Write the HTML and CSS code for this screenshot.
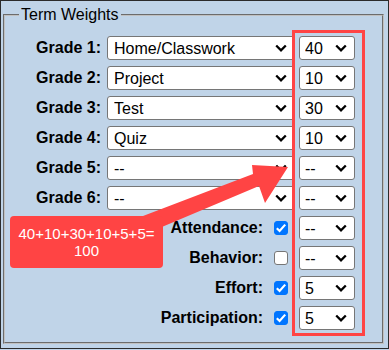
FILE: index.html
```html
<!DOCTYPE html>
<html>
<head>
<meta charset="utf-8">
<link rel="stylesheet" href="styles.css">
</head>
<body>
<div class="frame">
  <fieldset class="weights">
    <legend>Term Weights</legend>
    <div class="grid">
      <label class="lbl">Grade 1:</label>
      <select class="cat"><option>Home/Classwork</option></select>
      <select class="pct"><option>40</option></select>

      <label class="lbl">Grade 2:</label>
      <select class="cat"><option>Project</option></select>
      <select class="pct"><option>10</option></select>

      <label class="lbl">Grade 3:</label>
      <select class="cat"><option>Test</option></select>
      <select class="pct"><option>30</option></select>

      <label class="lbl">Grade 4:</label>
      <select class="cat"><option>Quiz</option></select>
      <select class="pct"><option>10</option></select>

      <label class="lbl">Grade 5:</label>
      <select class="cat"><option>--</option></select>
      <select class="pct"><option>--</option></select>

      <label class="lbl">Grade 6:</label>
      <select class="cat"><option>--</option></select>
      <select class="pct"><option>--</option></select>

      <div class="extra"><label class="lbl">Attendance:</label><input class="chk" type="checkbox" checked></div>
      <select class="pct"><option>--</option></select>

      <div class="extra"><label class="lbl">Behavior:</label><input class="chk" type="checkbox"></div>
      <select class="pct"><option>--</option></select>

      <div class="extra"><label class="lbl">Effort:</label><input class="chk" type="checkbox" checked></div>
      <select class="pct"><option>5</option></select>

      <div class="extra"><label class="lbl">Participation:</label><input class="chk" type="checkbox" checked></div>
      <select class="pct"><option>5</option></select>
    </div>
  </fieldset>

  <div class="highlight"></div>
  <svg class="arrow" width="389" height="350" viewBox="0 0 389 350">
    <polygon points="143,216 253,174 252,165 288,167 265,203 259,186 150,232" fill="#ff4444"/>
  </svg>
  <div class="callout">40+10+30+10+5+5=<br>100</div>
</div>
</body>
</html>
```

FILE: styles.css
```css
html, body {
  margin: 0;
  padding: 0;
  background: #c0d4e8;
}

.frame {
  position: relative;
  width: 387px;
  height: 347px;
  border: 1px solid #2b2b2b;
  background: #c0d4e8;
  font-family: "Liberation Sans", Arial, sans-serif;
  color: #000;
}

.weights {
  box-sizing: border-box;
  width: 381px;
  margin: 5px 0 0 2px;
  padding: 12px 2px 12px 2px;
  border: 2px groove #c0c0c0;
}

.weights legend {
  margin-left: 12px;
  padding: 0 2px;
  font-size: 16px;
  line-height: 18px;
  color: #000;
}

.grid {
  display: grid;
  grid-template-columns: 94px 194px 60px;
  grid-auto-rows: 24px;
  row-gap: 6px;
  align-items: center;
}

.lbl {
  font-weight: bold;
  font-size: 16px;
  line-height: 18px;
  text-align: right;
  white-space: nowrap;
}

select {
  -webkit-appearance: none;
  appearance: none;
  box-sizing: border-box;
  height: 24px;
  margin: 0;
  border: 1px solid #767676;
  border-radius: 3px;
  background-color: #fff;
  background-image: url("data:image/svg+xml;utf8,<svg xmlns='http://www.w3.org/2000/svg' width='12' height='8' viewBox='0 0 12 8'><path d='M1.2 1.5l4.8 4.8 4.8-4.8' fill='none' stroke='%23000' stroke-width='2.3'/></svg>");
  background-repeat: no-repeat;
  background-position: right 7px center;
  font-family: "Liberation Sans", Arial, sans-serif;
  font-size: 16px;
  color: #000;
  padding: 0 20px 0 6px;
}

.cat {
  width: 188px;
  justify-self: end;
}

.pct {
  width: 56px;
  justify-self: end;
  padding-left: 5px;
}

.extra {
  grid-column: 1 / 3;
  display: flex;
  justify-content: flex-end;
  align-items: center;
  padding-right: 7px;
}

.chk {
  -webkit-appearance: none;
  appearance: none;
  box-sizing: border-box;
  width: 14px;
  height: 14px;
  margin: 0 0 0 11px;
  border: 1px solid #767676;
  border-radius: 3px;
  background: #fff;
}

.chk:checked {
  border-color: #0075ff;
  background-color: #0075ff;
  background-image: url("data:image/svg+xml;utf8,<svg xmlns='http://www.w3.org/2000/svg' width='14' height='14' viewBox='0 0 14 14'><path d='M2.8 7.2l2.8 2.8 5.6-6.4' fill='none' stroke='%23fff' stroke-width='2.2'/></svg>");
  background-repeat: no-repeat;
  background-position: center;
}

.highlight {
  position: absolute;
  left: 291px;
  top: 29px;
  width: 67px;
  height: 300px;
  border: 3px solid #ff4444;
}

.arrow {
  position: absolute;
  left: -1px;
  top: -1px;
  pointer-events: none;
}

.callout {
  position: absolute;
  left: 9px;
  top: 215px;
  box-sizing: border-box;
  width: 153px;
  height: 52px;
  padding-top: 9px;
  border-radius: 4px;
  background: #ff4444;
  color: #fff;
  font-size: 15px;
  line-height: 17px;
  text-align: center;
}
```
